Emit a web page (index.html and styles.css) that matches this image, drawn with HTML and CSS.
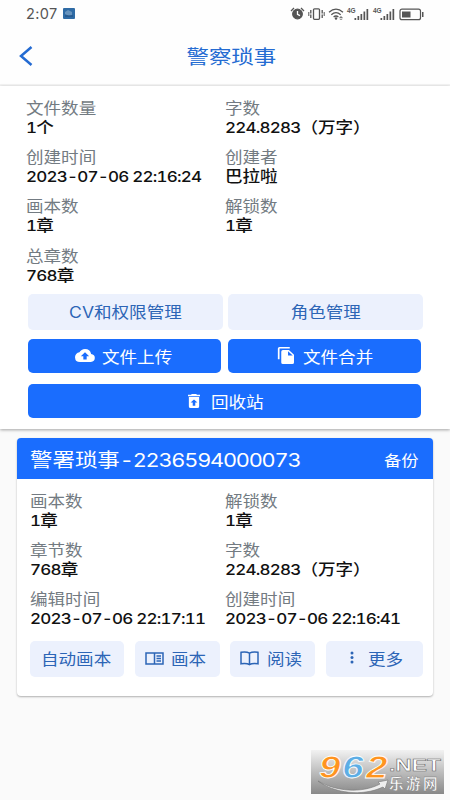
FILE: index.html
```html
<!DOCTYPE html>
<html lang="zh-CN">
<head>
<meta charset="utf-8">
<title>警察琐事</title>
<link rel="stylesheet" href="styles.css">
</head>
<body>
<div class="statusbar">
  <span class="clock">2:07</span>
  <svg class="notice" width="12" height="11" viewBox="0 0 12 11"><rect width="12" height="11" rx="1" fill="#2f6ba5"/><path d="M2 4l3-2 4 2v3l-3 1-4-2z" fill="#6793bd"/><path d="M2 8h8" stroke="#204d7d"/></svg>
  <svg class="signals" width="136" height="16" viewBox="0 0 136 16">
    <g fill="none" stroke="#555" stroke-width="1.3">
      <circle cx="7.5" cy="8" r="4.8" fill="#555"/>
      <path d="M1 5l3-3M11 2l3 3"/>
      <path d="M7.5 5v3.3l2.5 1.3" stroke="#fff"/>
      <rect x="23.5" y="2.8" width="6" height="10.5" rx="1"/>
      <path d="M20.8 4v8M32.2 4v8" stroke-dasharray="3.500 1"/><path d="M18.800 6v4M34.200 6v4" stroke-width="1"/>
      <path d="M39 6.2q7-6 14 0M41.3 8.7q4.700-4 9.400 0M43.600 11q2.400-2 4.800 0"/>
    </g>
    <circle cx="46" cy="12.500" r="1.200" fill="#555"/><path d="M49 12l2-2 2 2zM49 12.700h4l-2 1.300z" fill="#777"/>
    <g fill="#555">
      <path d="M64.500 12h1.700v2h-1.700zM67.500 10h1.700v4h-1.700zM70.500 8h1.700v6h-1.700zM73.500 5.500h1.700V14h-1.700zM76.500 3h1.700v11h-1.700z"/>
      <path d="M90.500 12h1.700v2h-1.700zM93.500 10h1.700v4h-1.700zM96.500 8h1.700v6h-1.700zM99.500 5.500h1.700V14h-1.700zM102.500 3h1.700v11h-1.700z"/>
      <rect x="112" y="5.500" width="8.500" height="6"/><rect x="132" y="6" width="1.500" height="5"/>
    </g>
    <rect x="110" y="3.200" width="20.500" height="10.500" rx="2" fill="none" stroke="#555" stroke-width="1.200"/>
    <g class="net"><text x="57" y="7.200">4G</text><text x="83" y="7.200">4G</text></g>
  </svg>
</div>
<header class="appbar">
  <svg class="back" width="14" height="20" viewBox="0 0 14 20"><path d="M12.500 1L2 10l10.500 9" fill="none" stroke="#246bd2" stroke-width="2.500"/></svg>
  <h1><span class="wide mid">警察琐事</span></h1>
</header>
<section class="summary">
  <dl class="facts">
    <div><dt class="wide">文件数量</dt><dd class="wide"><span class="num">1</span>个</dd></div>
    <div><dt class="wide">字数</dt><dd class="wide"><span class="num">224.8283</span>（万字）</dd></div>
    <div><dt class="wide">创建时间</dt><dd class="wide"><span class="num">2023-07-06 22:16:24</span></dd></div>
    <div><dt class="wide">创建者</dt><dd class="wide">巴拉啦</dd></div>
    <div><dt class="wide">画本数</dt><dd class="wide"><span class="num">1</span>章</dd></div>
    <div><dt class="wide">解锁数</dt><dd class="wide"><span class="num">1</span>章</dd></div>
    <div><dt class="wide">总章数</dt><dd class="wide"><span class="num">768</span>章</dd></div>
  </dl>
  <div class="soft-row">
    <button class="soft"><span class="wide mid">CV和权限管理</span></button>
    <button class="soft"><span class="wide mid">角色管理</span></button>
  </div>
  <div class="solid-row">
    <button class="solid upload"><svg width="20" height="13" viewBox="0 4 24 16" preserveAspectRatio="none"><path fill="#fff" d="M19.350 10.040A7.490 7.490 0 0 0 12 4C9.110 4 6.600 5.640 5.350 8.040A6 6 0 0 0 6 20h13a5 5 0 0 0 .350-9.960zM14 13v4h-4v-4H7l5-5 5 5z"/></svg><span class="wide">文件上传</span></button>
    <button class="solid merge"><svg width="17" height="17" viewBox="1 1 20 22" preserveAspectRatio="none"><path fill="#fff" d="M16 1H4a2 2 0 0 0-2 2v14h2V3h12zM15 5l6 6v10a2 2 0 0 1-2 2H8a2 2 0 0 1-2-2V7a2 2 0 0 1 2-2zm-1 7h5.500L14 6.500z"/></svg><span class="wide">文件合并</span></button>
  </div>
  <button class="solid recycle"><svg width="12" height="14" viewBox="5 3 14 18" preserveAspectRatio="none"><path fill="#fff" d="M6 19a2 2 0 0 0 2 2h8a2 2 0 0 0 2-2V7H6zm6-9 4 4h-2.500v4h-3v-4H8zM15.500 4l-1-1h-5l-1 1H5v2h14V4z"/></svg><span class="wide">回收站</span></button>
</section>
<article class="card">
  <div class="card-head"><h2 class="wide">警署琐事<span class="num">-2236594000073</span></h2><a class="wide">备份</a></div>
  <dl class="facts">
    <div><dt class="wide">画本数</dt><dd class="wide"><span class="num">1</span>章</dd></div>
    <div><dt class="wide">解锁数</dt><dd class="wide"><span class="num">1</span>章</dd></div>
    <div><dt class="wide">章节数</dt><dd class="wide"><span class="num">768</span>章</dd></div>
    <div><dt class="wide">字数</dt><dd class="wide"><span class="num">224.8283</span>（万字）</dd></div>
    <div><dt class="wide">编辑时间</dt><dd class="wide"><span class="num">2023-07-06 22:17:11</span></dd></div>
    <div><dt class="wide">创建时间</dt><dd class="wide"><span class="num">2023-07-06 22:16:41</span></dd></div>
  </dl>
  <div class="actions">
    <button class="soft auto"><span class="wide">自动画本</span></button>
    <button class="soft script"><svg width="19" height="13" viewBox="0 0 19 13"><path d="M1 1h17v11H1zM9.500 1v11M11.500 4h4.500M11.500 6.500h4.500M11.500 9h4.500" fill="none" stroke="#2c65b6" stroke-width="1.500"/></svg><span class="wide">画本</span></button>
    <button class="soft read"><svg width="19" height="15" viewBox="0 0 19 15"><path d="M9.500 2.200C7.500 1 4 .8 1 1.300v11.500c3-.5 6.500-.4 8.500.9 2-1.300 5.500-1.400 8.500-.9V1.300c-3-.5-6.500-.3-8.500.9zv11.500" fill="none" stroke="#2c65b6" stroke-width="1.500"/></svg><span class="wide">阅读</span></button>
    <button class="soft more"><svg width="4" height="14" viewBox="0 0 4 14"><g fill="#2c65b6"><circle cx="2" cy="2" r="1.500"/><circle cx="2" cy="6.500" r="1.500"/><circle cx="2" cy="11" r="1.500"/></g></svg><span class="wide">更多</span></button>
  </div>
</article>
<svg class="watermark" width="133" height="44" viewBox="0 0 133 44">
  <defs><linearGradient id="shade" x1="0" y1="0" x2="0" y2="1"><stop offset="0" stop-color="#f2f2f2"/><stop offset="1" stop-color="#888"/></linearGradient></defs>
  <rect width="133" height="44" fill="url(#shade)"/>
  <path d="M7 31c17 10 43 13 62 3l-2-2 10-2-3 9-2-2C51 47 23 43 7 31z" fill="#eee" stroke="#777" stroke-width=".6"/>
  <g class="brand">
    <text transform="translate(8 28) scale(1.250 1)" fill="#ff9420">9</text>
    <text transform="translate(31 28) scale(1.250 1)" fill="#5daee5">6</text>
    <text transform="translate(55 28) scale(1.250 1)" fill="#ff9420">2</text>
  </g>
  <text class="domain" x="78" y="20.500" textLength="52" lengthAdjust="spacingAndGlyphs">.NET</text>
  <text class="site" x="78" y="39">乐游网</text>
</svg>
</body>
</html>
```
FILE: styles.css
```css
* { box-sizing: border-box; }
body { margin: 0; width: 450px; height: 800px; overflow: hidden; position: relative; background: #fafafa; font-family: Inter, "Noto Sans CJK SC", sans-serif; font-size: 15.4px; color: #111; }
h1, h2, dl, dd, dt { margin: 0; font-weight: 400; }
button { border: 0; padding: 0; font: inherit; display: flex; align-items: center; justify-content: center; }
.wide { display: block; width: max-content; white-space: nowrap; transform: scaleX(1.14); transform-origin: left center; }
.mid { transform-origin: center; }
.num { font-size: .97em; letter-spacing: -.046em; font-variant-numeric: tabular-nums; }
.statusbar { height: 27px; background: #fefefe; display: flex; align-items: center; padding-left: 26px; }
.clock { font-size: 14.5px; color: #555; width: 37px; letter-spacing: .4px; }
.signals { margin-left: 215px; }
.net text { font: 700 6.5px "Liberation Sans", sans-serif; fill: #555; }
.appbar { height: 59px; background: #fefefe; border-bottom: 2px solid #f4f4f4; display: grid; grid-template-columns: 20px 1fr 20px; align-items: center; padding: 0 19px; }
h1 { display: flex; justify-content: center; color: #246bd2; font-size: 19.7px; padding-left: 12px; }
.summary { height: 343px; background: #fff; padding: 13px 27px 0 25.5px; box-shadow: 0 1px 3px rgba(0,0,0,.35); position: relative; }
.facts { display: grid; grid-template-columns: 199.5px 1fr; grid-auto-rows: 49.2px; }
dt { color: #737b82; height: 20px; line-height: 20px; }
dd { height: 20px; line-height: 17px; color: #111; font-weight: 450; }
.soft { background: #ecf1fd; color: #2c65b6; border-radius: 5px; height: 36px; padding-bottom: 1px; }
.solid { background: #1a6dfe; color: #fff; border-radius: 5px; height: 34px; justify-content: flex-start; }
.soft-row { display: grid; grid-template-columns: 195px 195px; gap: 5px; margin: -2px 0 9px 2.8px; }
.solid-row { display: grid; grid-template-columns: 193px 193px; gap: 7px; margin: 0 0 11px 2.8px; }
.upload { padding-left: 47px; gap: 7px; }
.merge { padding-left: 48.5px; gap: 9px; }
.recycle { width: 393px; margin-left: 2.8px; padding-left: 160px; gap: 11px; }
.card { margin: 9px 17px 0 17px; width: 416px; height: 258px; background: #fff; border-radius: 4px; box-shadow: 0 1px 2px rgba(0,0,0,.3); overflow: hidden; }
.card-head { height: 41px; background: #1a6dfe; color: #fff; display: flex; align-items: center; justify-content: space-between; padding: 0 19px 0 13px; }
.card h2 { font-size: 19.7px; }
.card h2 .num { letter-spacing: -.056em; }
.card-head a { font-size: 15.2px; }
.card .facts { margin: 13px 0 0 13px; grid-template-columns: 195px 1fr; }
.actions { display: grid; grid-template-columns: 94px 85px 85px 97px; gap: 10.6px; margin: 1px 0 0 13px; }
.actions .soft { justify-content: flex-start; }
.auto { padding-left: 11px; }
.script, .read { padding-left: 10px; gap: 7.5px; }
.more { padding-left: 24px; gap: 14px; }
.watermark { position: absolute; left: 311px; top: 750px; }
.brand text { font: italic 700 31px "Liberation Sans", sans-serif; stroke: #fff; stroke-width: .8; }
.domain { font: 700 17px "Liberation Sans", sans-serif; fill: #fff; stroke: #666; stroke-width: .5; }
.site { font: 700 14.5px "Noto Sans CJK SC", sans-serif; letter-spacing: 2.5px; fill: #fff; stroke: #777; stroke-width: .4; }
```
